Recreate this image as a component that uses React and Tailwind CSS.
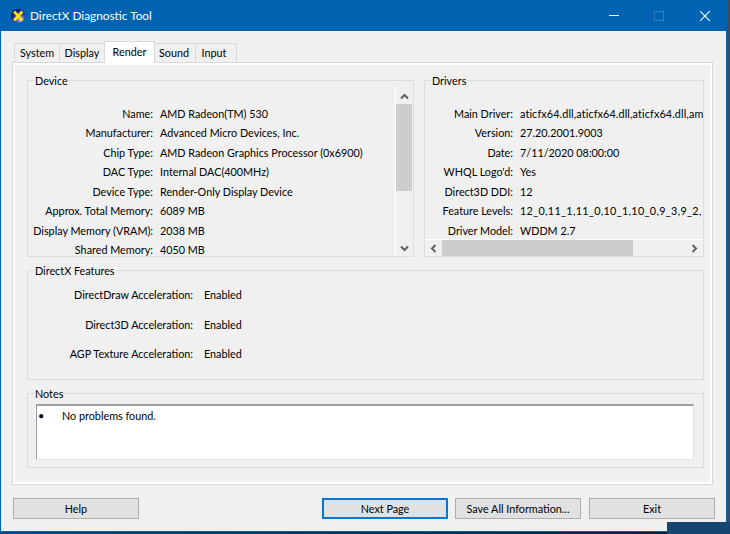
const deviceRows = [
  ["Name:", "AMD Radeon(TM) 530"],
  ["Manufacturer:", "Advanced Micro Devices, Inc."],
  ["Chip Type:", "AMD Radeon Graphics Processor (0x6900)"],
  ["DAC Type:", "Internal DAC(400MHz)"],
  ["Device Type:", "Render-Only Display Device"],
  ["Approx. Total Memory:", "6089 MB"],
  ["Display Memory (VRAM):", "2038 MB"],
  ["Shared Memory:", "4050 MB"],
];

const driverRows = [
  ["Main Driver:", "aticfx64.dll,aticfx64.dll,aticfx64.dll,am", "tracking-[0.12px]"],
  ["Version:", "27.20.2001.9003"],
  ["Date:", "7/11/2020 08:00:00"],
  ["WHQL Logo'd:", "Yes"],
  ["Direct3D DDI:", "12"],
  ["Feature Levels:", "12_0,11_1,11_0,10_1,10_0,9_3,9_2,", "tracking-[0.33px]"],
  ["Driver Model:", "WDDM 2.7"],
];

const features = [
  ["DirectDraw Acceleration:", "Enabled"],
  ["Direct3D Acceleration:", "Enabled"],
  ["AGP Texture Acceleration:", "Enabled"],
];

const tabs = ["System", "Display", "Render", "Sound", "Input"];
const tabWidths = ["w-[46px]", "w-[46px]", "w-[51px]", "w-[42px] pr-[2px]", "w-[42px] pr-[4px]"];

const Logo = () => (
  <svg width="14" height="14" viewBox="0 0 14 14" className="shrink-0">
    <defs>
      <radialGradient id="ball" cx="0.68" cy="0.75" r="0.85">
        <stop offset="0" stopColor="#c9c4f5" />
        <stop offset="0.45" stopColor="#3d35b0" />
        <stop offset="1" stopColor="#0c0a50" />
      </radialGradient>
    </defs>
    <circle cx="7" cy="7" r="7" fill="url(#ball)" />
    <path d="M4 3.6 L10.4 10.4 M10.4 3.6 L4 10.4" stroke="#f5e60a" strokeWidth="2.8" strokeLinecap="square" />
  </svg>
);

const Chevron = ({ points }) => (
  <svg width="9" height="9" viewBox="0 0 9 9" fill="none" stroke="#606060" strokeWidth="2">
    <polyline points={points} />
  </svg>
);

const GroupBox = ({ title, className, children }) => (
  <div className={`relative border border-[#dcdcdc] ${className}`}>
    <span className="absolute -top-[9px] left-[6px] bg-[#f0f0f0] px-px leading-[17px]">{title}</span>
    {children}
  </div>
);

const Row = ({ label, value, labelWidth, valueClass = "" }) => (
  <div className="flex h-[19.5px] items-center whitespace-nowrap">
    <span className={`shrink-0 text-right ${labelWidth}`}>{label}</span>
    <span className={`ml-[7px] ${valueClass}`}>{value}</span>
  </div>
);

const DialogButton = ({ label, focused, className = "" }) => (
  <button
    className={`h-[21px] w-[126px] bg-[#e1e1e1] pt-px text-center leading-none ${focused ? "border-2 border-[#0078d7]" : "border border-[#adadad]"} ${className}`}
  >
    {label}
  </button>
);

export default function App() {
  return (
    <div className="relative h-[534px] w-[730px] overflow-hidden bg-gradient-to-r from-[#14466f] to-[#0c1a2a] font-['Lato',sans-serif] text-[10.8px] text-black">
      <div className="flex h-[532px] w-[727px] flex-col border-x border-b border-[#0063b1] bg-[#f0f0f0]">
        <div className="flex h-[31px] shrink-0 items-center bg-[#0063b1] pl-[10px] text-[11.8px] text-white">
          <Logo />
          <span className="ml-[5px] flex-1">DirectX Diagnostic Tool</span>
          <div className="flex items-center pr-[16px]">
            <div className="mr-[35px] h-px w-[10px] bg-white" />
            <div className="mr-[36px] h-[10px] w-[10px] border border-[#2f7fc4]" />
            <svg width="10" height="10" viewBox="0 0 10 10" stroke="white" strokeWidth="1.1">
              <path d="M0 0 L10 10 M10 0 L0 10" />
            </svg>
          </div>
        </div>

        <div className="flex flex-1 flex-col px-[11px] pt-[11px]">
          <div className="flex h-[20px] items-end pl-[2px]">
            {tabs.map((tab, i) =>
              tab === "Render" ? (
                <div
                  key={tab}
                  className={`relative z-10 -mb-px -ml-px flex h-[22px] items-center justify-center border border-b-0 border-[#d9d9d9] bg-white pb-px ${tabWidths[i]}`}
                >
                  {tab}
                </div>
              ) : (
                <div
                  key={tab}
                  className={`flex h-[19px] items-center justify-center border border-b-0 border-[#d9d9d9] pt-px ${i > 0 ? "-ml-px" : ""} ${tabWidths[i]}`}
                >
                  {tab}
                </div>
              )
            )}
          </div>

          <div className="h-[423px] w-[701px] border border-[#d9d9d9]">
            <div className="flex h-full flex-col border-2 border-white bg-[#f0f0f0] pl-[12px] pt-[15px]">
              <div className="flex gap-[10px]">
                <GroupBox title="Device" className="h-[177px] w-[387px]">
                  <div className="h-full overflow-hidden pt-[23px]">
                    {deviceRows.map(([label, value]) => (
                      <Row key={label} label={label} value={value} labelWidth="w-[125px]" />
                    ))}
                  </div>
                  <div className="absolute bottom-0 right-px top-[6px] flex w-[17px] flex-col border-l border-white bg-[#f0f0f0]">
                    <div className="flex h-[17px] items-center justify-center pt-[2px]">
                      <Chevron points="1,6.5 4.5,3 8,6.5" />
                    </div>
                    <div className="h-[87px] bg-[#cdcdcd]" />
                    <div className="flex-1" />
                    <div className="flex h-[16px] items-center justify-center">
                      <Chevron points="1,2.5 4.5,6 8,2.5" />
                    </div>
                  </div>
                </GroupBox>

                <GroupBox title="Drivers" className="h-[177px] w-[280px]">
                  <div className="h-full overflow-hidden pr-px pt-[23px]">
                    {driverRows.map(([label, value, valueClass]) => (
                      <Row key={label} label={label} value={value} labelWidth="w-[88px]" valueClass={valueClass} />
                    ))}
                  </div>
                  <div className="absolute bottom-0 left-0 right-0 flex h-[17px] border-t border-white bg-[#f0f0f0]">
                    <div className="flex w-[17px] items-center justify-center">
                      <Chevron points="6.5,1 3,4.5 6.5,8" />
                    </div>
                    <div className="w-[191px] bg-[#cdcdcd]" />
                    <div className="flex-1" />
                    <div className="flex w-[17px] items-center justify-center">
                      <Chevron points="2.5,1 6,4.5 2.5,8" />
                    </div>
                  </div>
                </GroupBox>
              </div>

              <GroupBox title="DirectX Features" className="mt-[13px] h-[110px] w-[677px]">
                <div className="flex flex-col gap-[11px] pt-[15px]">
                  {features.map(([label, value]) => (
                    <div key={label} className="flex h-[18.5px] items-center whitespace-nowrap">
                      <span className="w-[165px] text-right">{label}</span>
                      <span className="ml-[11px]">{value}</span>
                    </div>
                  ))}
                </div>
              </GroupBox>

              <GroupBox title="Notes" className="mt-[13px] h-[75px] w-[677px] pl-[8px] pt-[10px]">
                <div className="flex h-[56px] w-[658px] border border-b-[#e3e3e3] border-l-[#a0a0a0] border-r-[#e3e3e3] border-t-2 border-t-[#a0a0a0] bg-white pl-[1px] pt-px">
                  <span className="w-[24px] text-[11px] leading-[17px]">•</span>
                  <span className="leading-[17px]">No problems found.</span>
                </div>
              </GroupBox>
            </div>
          </div>

          <div className="mt-[13px] flex items-start pl-px">
            <DialogButton label="Help" />
            <DialogButton label="Next Page" focused className="ml-[183px]" />
            <DialogButton label="Save All Information..." className="ml-[7px]" />
            <DialogButton label="Exit" className="ml-[8px]" />
          </div>
        </div>
      </div>
      <div className="absolute right-0 top-0 h-[522px] w-[3px] bg-[#3a4a6a]" />
      <div className="absolute bottom-0 right-0 h-[12px] w-[63px] bg-[#14466f]" />
    </div>
  );
}
